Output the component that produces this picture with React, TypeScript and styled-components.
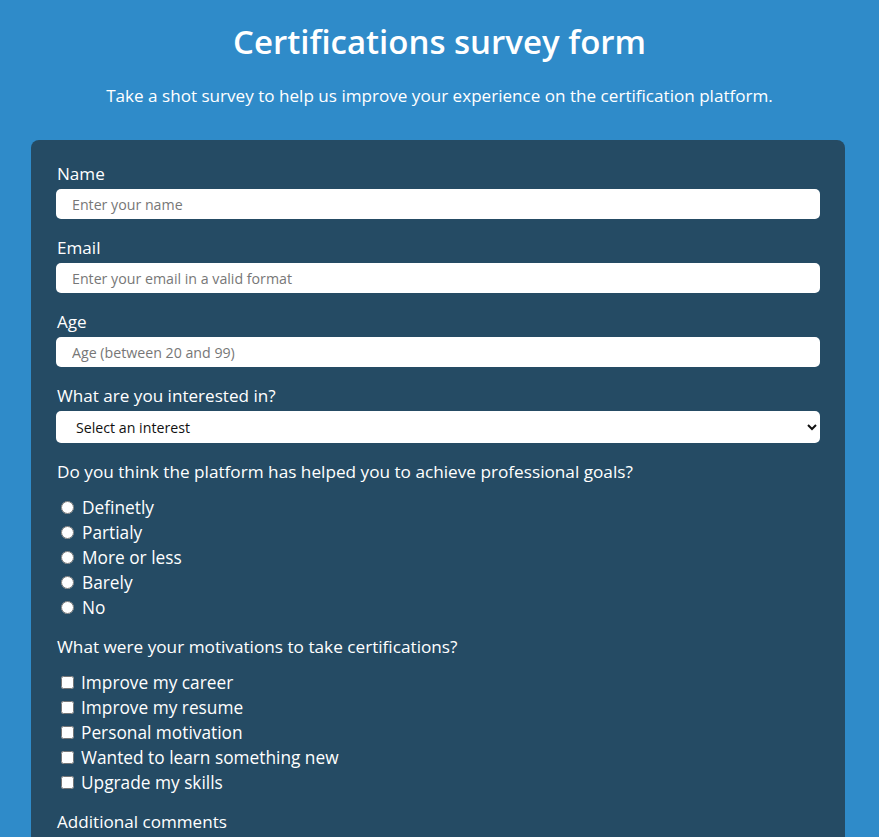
import React from "react";
import styled, { createGlobalStyle } from "styled-components";

const GlobalStyle = createGlobalStyle`
  html, body {
    margin: 0;
    padding: 0;
    background: #2f8bc9;
  }
  body {
    font-family: "Open Sans", "Liberation Sans", sans-serif;
    color: #ffffff;
  }
  * { box-sizing: border-box; }
`;

const Header = styled.header`
  text-align: center;
  padding-top: 22px;
`;

const Title = styled.h1`
  margin: 0;
  font-size: 33px;
  font-weight: 600;
  line-height: 40px;
`;

const Subtitle = styled.p`
  margin: 23px 0 0;
  font-size: 17.1px;
  line-height: 22px;
`;

const Card = styled.form`
  width: 814px;
  margin: 33px 0 0 31px;
  background: #254b64;
  border-radius: 8px;
  padding: 24px 25px 30px;
`;

const Field = styled.div`
  margin-bottom: 19px;
`;

const Label = styled.label`
  display: block;
  font-size: 17.1px;
  line-height: 20px;
  margin-bottom: 5px;
  padding-left: 1px;
`;

const Input = styled.input`
  display: block;
  width: 100%;
  height: 30px;
  border: none;
  border-radius: 5px;
  padding: 0 16px;
  font-family: inherit;
  font-size: 14.2px;
  color: #333;
  background: #fff;
  &::placeholder { color: #777; }
`;

const Select = styled.select`
  display: block;
  width: 100%;
  height: 32px;
  border: none;
  border-radius: 5px;
  padding: 0 16px;
  font-family: inherit;
  font-size: 14.2px;
  color: #111;
  background: #fff;
`;

const Question = styled.p`
  margin: 0 0 13px;
  font-size: 17.2px;
  line-height: 20px;
  padding-left: 1px;
`;

const OptionList = styled.div`
  display: flex;
  flex-direction: column;
  margin-bottom: 17px;
`;

const Option = styled.label`
  display: flex;
  align-items: center;
  height: 25px;
  font-size: 17.3px;
  padding-left: 4px;
`;

const Radio = styled.input.attrs({ type: "radio" })`
  width: 13px;
  height: 13px;
  margin: 0 8px 0 1px;
`;

const Check = styled.input.attrs({ type: "checkbox" })`
  width: 13px;
  height: 13px;
  margin: 0 7px 0 1px;
`;

const radios = ["Definetly", "Partialy", "More or less", "Barely", "No"];
const checks = [
  "Improve my career",
  "Improve my resume",
  "Personal motivation",
  "Wanted to learn something new",
  "Upgrade my skills",
];

export default function App() {
  return (
    <>
      <GlobalStyle />
      <Header>
        <Title>Certifications survey form</Title>
        <Subtitle>
          Take a shot survey to help us improve your experience on the certification platform.
        </Subtitle>
      </Header>
      <Card>
        <Field>
          <Label htmlFor="name">Name</Label>
          <Input id="name" type="text" placeholder="Enter your name" />
        </Field>
        <Field>
          <Label htmlFor="email">Email</Label>
          <Input id="email" type="email" placeholder="Enter your email in a valid format" />
        </Field>
        <Field>
          <Label htmlFor="age">Age</Label>
          <Input id="age" type="number" placeholder="Age (between 20 and 99)" />
        </Field>
        <Field>
          <Label htmlFor="interest">What are you interested in?</Label>
          <Select id="interest" defaultValue="">
            <option value="">Select an interest</option>
            <option value="web">Web development</option>
            <option value="data">Data science</option>
          </Select>
        </Field>
        <Question>Do you think the platform has helped you to achieve professional goals?</Question>
        <OptionList>
          {radios.map((r) => (
            <Option key={r}>
              <Radio name="goals" value={r} />
              {r}
            </Option>
          ))}
        </OptionList>
        <Question>What were your motivations to take certifications?</Question>
        <OptionList>
          {checks.map((c) => (
            <Option key={c}>
              <Check value={c} />
              {c}
            </Option>
          ))}
        </OptionList>
        <Field>
          <Label htmlFor="comments">Additional comments</Label>
        </Field>
      </Card>
    </>
  );
}
